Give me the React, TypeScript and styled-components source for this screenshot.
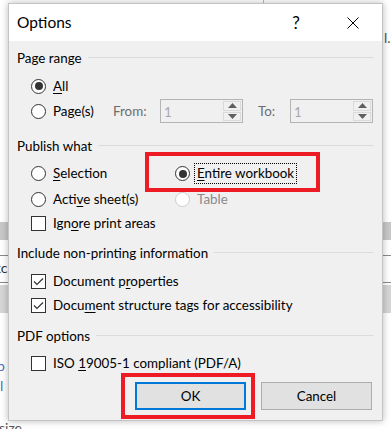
import React from 'react'
import { styled, createGlobalStyle } from 'styled-components'

const GlobalStyle = createGlobalStyle`
  html, body {
    margin: 0;
    padding: 0;
    background: #ffffff;
  }
  body {
    font-family: Lato, 'Noto Sans', Arial, sans-serif;
    font-size: 13.4px;
    color: #000;
  }
`

const Page = styled.div`
  position: relative;
  width: 391px;
  height: 429px;
  overflow: hidden;
  padding: 3px 8px 0;
  box-sizing: border-box;
`

// bits of the window behind the dialog
const Scrap = styled.div<{ $top: number; $left: number; $w: number; $h: number; $bg?: string }>`
  position: absolute;
  top: ${(p) => p.$top}px;
  left: ${(p) => p.$left}px;
  width: ${(p) => p.$w}px;
  height: ${(p) => p.$h}px;
  background: ${(p) => p.$bg || '#c8c8c8'};
`
const ScrapText = styled.div<{ $top: number; $left: number; $color?: string }>`
  position: absolute;
  top: ${(p) => p.$top}px;
  left: ${(p) => p.$left}px;
  font-size: 14px;
  line-height: 16px;
  color: ${(p) => p.$color || '#333'};
  white-space: nowrap;
`

const Dialog = styled.div`
  position: relative;
  width: 375px;
  height: 418px;
  box-sizing: border-box;
  border: 1px solid #c4c4c4;
  box-shadow: 0 0 7px rgba(0, 0, 0, 0.28);
  background: #f0f0f0;
  display: flex;
  flex-direction: column;
`

const TitleBar = styled.div`
  height: 37px;
  background: #fff;
  display: flex;
  align-items: center;
  padding-left: 8px;
  flex-shrink: 0;
`
const Title = styled.div`
  flex: 1;
  font-size: 15.5px;
  padding-bottom: 1px;
`
const TitleButton = styled.div`
  width: 46px;
  height: 37px;
  display: flex;
  align-items: center;
  justify-content: center;
  font-size: 17px;
  margin-right: 11px;
  &:last-child {
    margin-right: 6px;
  }
`

const Body = styled.div`
  flex: 1;
  display: flex;
  flex-direction: column;
  padding: 7px 8px 10px 8px;
`

const GroupHeader = styled.div<{ $mt?: number }>`
  display: flex;
  align-items: center;
  height: 20px;
  margin-top: ${(p) => p.$mt ?? 0}px;
  gap: 6px;
  &::after {
    content: '';
    flex: 1;
    height: 1px;
    background: #dcdcdc;
    margin-top: -1px;
  }
`

const Rows = styled.div<{ $mt?: number }>`
  display: flex;
  flex-direction: column;
  padding-left: 14px;
  margin-top: ${(p) => p.$mt ?? 0}px;
`

const Row = styled.div<{ $h: number }>`
  display: flex;
  align-items: center;
  height: ${(p) => p.$h}px;
`

const Cell = styled.div<{ $w?: number }>`
  position: relative;
  display: flex;
  align-items: center;
  width: ${(p) => (p.$w ? `${p.$w}px` : 'auto')};
  flex-shrink: 0;
  height: 100%;
`

const Highlight = styled.div<{ $l: number; $w: number; $t: number; $b: number }>`
  position: absolute;
  left: ${(p) => p.$l}px;
  width: ${(p) => p.$w}px;
  top: ${(p) => p.$t}px;
  bottom: ${(p) => p.$b}px;
  box-sizing: border-box;
  border: 4px solid #ed1c24;
  pointer-events: none;
`

const Radio = styled.span<{ $checked?: boolean; $disabled?: boolean }>`
  position: relative;
  width: 15px;
  height: 15px;
  box-sizing: border-box;
  border-radius: 50%;
  border: 1px solid ${(p) => (p.$disabled ? '#cccccc' : '#333333')};
  background: #fff;
  flex-shrink: 0;
  margin-right: 7px;
  &::after {
    content: '';
    display: ${(p) => (p.$checked ? 'block' : 'none')};
    position: absolute;
    left: 2.5px;
    top: 2.5px;
    width: 8px;
    height: 8px;
    border-radius: 50%;
    background: #333;
  }
`

const Box = styled.span`
  width: 15px;
  height: 15px;
  box-sizing: border-box;
  border: 1px solid #333;
  background: #fff;
  flex-shrink: 0;
  margin-right: 7px;
  display: flex;
  align-items: center;
  justify-content: center;
`

const Label = styled.span<{ $disabled?: boolean; $focus?: boolean }>`
  color: ${(p) => (p.$disabled ? '#8a8a8a' : '#000')};
  white-space: nowrap;
  line-height: 19px;
  padding: 0 2px;
  margin-left: -2px;
  outline: ${(p) => (p.$focus ? '1px dotted #000' : 'none')};
  outline-offset: 0;
`

const Key = styled.span`
  text-decoration: underline;
  text-underline-offset: 2px;
`

const FieldLabel = styled.span<{ $w: number; $ml?: number }>`
  color: #6d6d6d;
  width: ${(p) => p.$w}px;
  margin-left: ${(p) => p.$ml ?? 0}px;
  flex-shrink: 0;
`

const Spin = styled.div`
  width: 83px;
  height: 24px;
  box-sizing: border-box;
  border: 1px solid #b4b4b4;
  background: #f0f0f0;
  display: flex;
  flex-shrink: 0;
`
const SpinValue = styled.div`
  flex: 1 1 0;
  color: #a8a8a8;
  padding: 2px 0 0 3px;
  line-height: 20px;
`
const SpinButtons = styled.div`
  flex: 0 0 18px;
  display: flex;
  flex-direction: column;
  padding: 1px 1px 1px 0;
  gap: 1px;
`
const SpinButton = styled.div`
  flex: 1 1 0;
  min-height: 0;
  border: 1px solid #dadada;
  display: flex;
  align-items: center;
  justify-content: center;
  svg {
    display: block;
  }
`

const Footer = styled.div`
  display: flex;
  justify-content: flex-end;
  gap: 15px;
  margin-top: auto;
  padding-right: 2px;
`

const Button = styled.div<{ $default?: boolean }>`
  position: relative;
  width: 111px;
  height: 28px;
  box-sizing: border-box;
  background: #e1e1e1;
  border: ${(p) => (p.$default ? '2px solid #0078d7' : '1px solid #adadad')};
  display: flex;
  align-items: center;
  justify-content: center;
`

const Check = () => (
  <svg width="13" height="13" viewBox="0 0 13 13">
    <path d="M2 6.5 L5 9.5 L11 3.5" fill="none" stroke="#333" strokeWidth="1.2" />
  </svg>
)

const Arrow = ({ up }: { up?: boolean }) => (
  <svg width="9" height="5" viewBox="0 0 9 5">
    <path d={up ? 'M0 5 L4.5 0 L9 5 Z' : 'M0 0 L4.5 5 L9 0 Z'} fill="#606060" />
  </svg>
)

const Spinner = ({ value }: { value: string }) => (
  <Spin>
    <SpinValue>{value}</SpinValue>
    <SpinButtons>
      <SpinButton>
        <Arrow up />
      </SpinButton>
      <SpinButton>
        <Arrow />
      </SpinButton>
    </SpinButtons>
  </Spin>
)

export default function App() {
  return (
    <>
      <GlobalStyle />
      <Page>
        <Scrap $top={0} $left={263} $w={1} $h={3} $bg="#bbbbbb" />
        <Scrap $top={222} $left={0} $w={8} $h={18} />
        <Scrap $top={255} $left={0} $w={8} $h={1} $bg="#8a8a8a" />
        <Scrap $top={282} $left={0} $w={8} $h={1} $bg="#8a8a8a" />
        <Scrap $top={285} $left={0} $w={8} $h={28} $bg="#d6d6d6" />
        <Scrap $top={222} $left={383} $w={8} $h={18} />
        <Scrap $top={255} $left={383} $w={8} $h={1} $bg="#8a8a8a" />
        <Scrap $top={282} $left={383} $w={8} $h={1} $bg="#8a8a8a" />
        <Scrap $top={285} $left={383} $w={8} $h={28} $bg="#d6d6d6" />
        <ScrapText $top={260} $left={-6}>xc</ScrapText>
        <ScrapText $top={358} $left={-3} $color="#4472c4">p</ScrapText>
        <ScrapText $top={378} $left={0} $color="#4472c4">l</ScrapText>
        <ScrapText $top={420} $left={-1} $color="#555">size</ScrapText>
        <ScrapText $top={30} $left={384} $color="#555">l.</ScrapText>

        <Dialog>
          <TitleBar>
            <Title>Options</Title>
            <TitleButton>?</TitleButton>
            <TitleButton>
              <svg width="12" height="12" viewBox="0 0 12 12">
                <path d="M0.5 0.5 L11.5 11.5 M11.5 0.5 L0.5 11.5" stroke="#000" strokeWidth="1" />
              </svg>
            </TitleButton>
          </TitleBar>
          <Body>
            <GroupHeader>Page range</GroupHeader>
            <Rows $mt={6}>
              <Row $h={24}>
                <Radio $checked />
                <Label>
                  <Key>A</Key>ll
                </Label>
              </Row>
              <Row $h={26}>
                <Cell $w={82}>
                  <Radio />
                  <Label>
                    Pa<Key>g</Key>e(s)
                  </Label>
                </Cell>
                <FieldLabel $w={47}>From:</FieldLabel>
                <Spinner value="1" />
                <FieldLabel $w={32} $ml={15}>
                  To:
                </FieldLabel>
                <Spinner value="1" />
              </Row>
            </Rows>

            <GroupHeader $mt={12}>Publish what</GroupHeader>
            <Rows $mt={5}>
              <Row $h={25}>
                <Cell $w={144}>
                  <Radio />
                  <Label>
                    <Key>S</Key>election
                  </Label>
                </Cell>
                <Cell>
                  <Highlight $l={-30} $w={175} $t={-9} $b={-6} />
                  <Radio $checked />
                  <Label $focus>
                    <Key>E</Key>ntire workbook
                  </Label>
                </Cell>
              </Row>
              <Row $h={26}>
                <Cell $w={144}>
                  <Radio />
                  <Label>
                    Acti<Key>v</Key>e sheet(s)
                  </Label>
                </Cell>
                <Cell>
                  <Radio $disabled />
                  <Label $disabled>Table</Label>
                </Cell>
              </Row>
              <Row $h={23}>
                <Box />
                <Label>
                  Ign<Key>o</Key>re print areas
                </Label>
              </Row>
            </Rows>

            <GroupHeader $mt={8}>Include non-printing information</GroupHeader>
            <Rows $mt={6}>
              <Row $h={24}>
                <Box>
                  <Check />
                </Box>
                <Label>
                  Document p<Key>r</Key>operties
                </Label>
              </Row>
              <Row $h={24}>
                <Box>
                  <Check />
                </Box>
                <Label>
                  Docu<Key>m</Key>ent structure tags for accessibility
                </Label>
              </Row>
            </Rows>

            <GroupHeader $mt={9}>PDF options</GroupHeader>
            <Rows $mt={5}>
              <Row $h={24}>
                <Box />
                <Label>
                  ISO <Key>1</Key>9005-1 compliant (PDF/A)
                </Label>
              </Row>
            </Rows>

            <Footer>
              <Button $default>
                OK
                <Highlight $l={-16} $w={134} $t={-11} $b={-11} />
              </Button>
              <Button>Cancel</Button>
            </Footer>
          </Body>
        </Dialog>
      </Page>
    </>
  )
}
